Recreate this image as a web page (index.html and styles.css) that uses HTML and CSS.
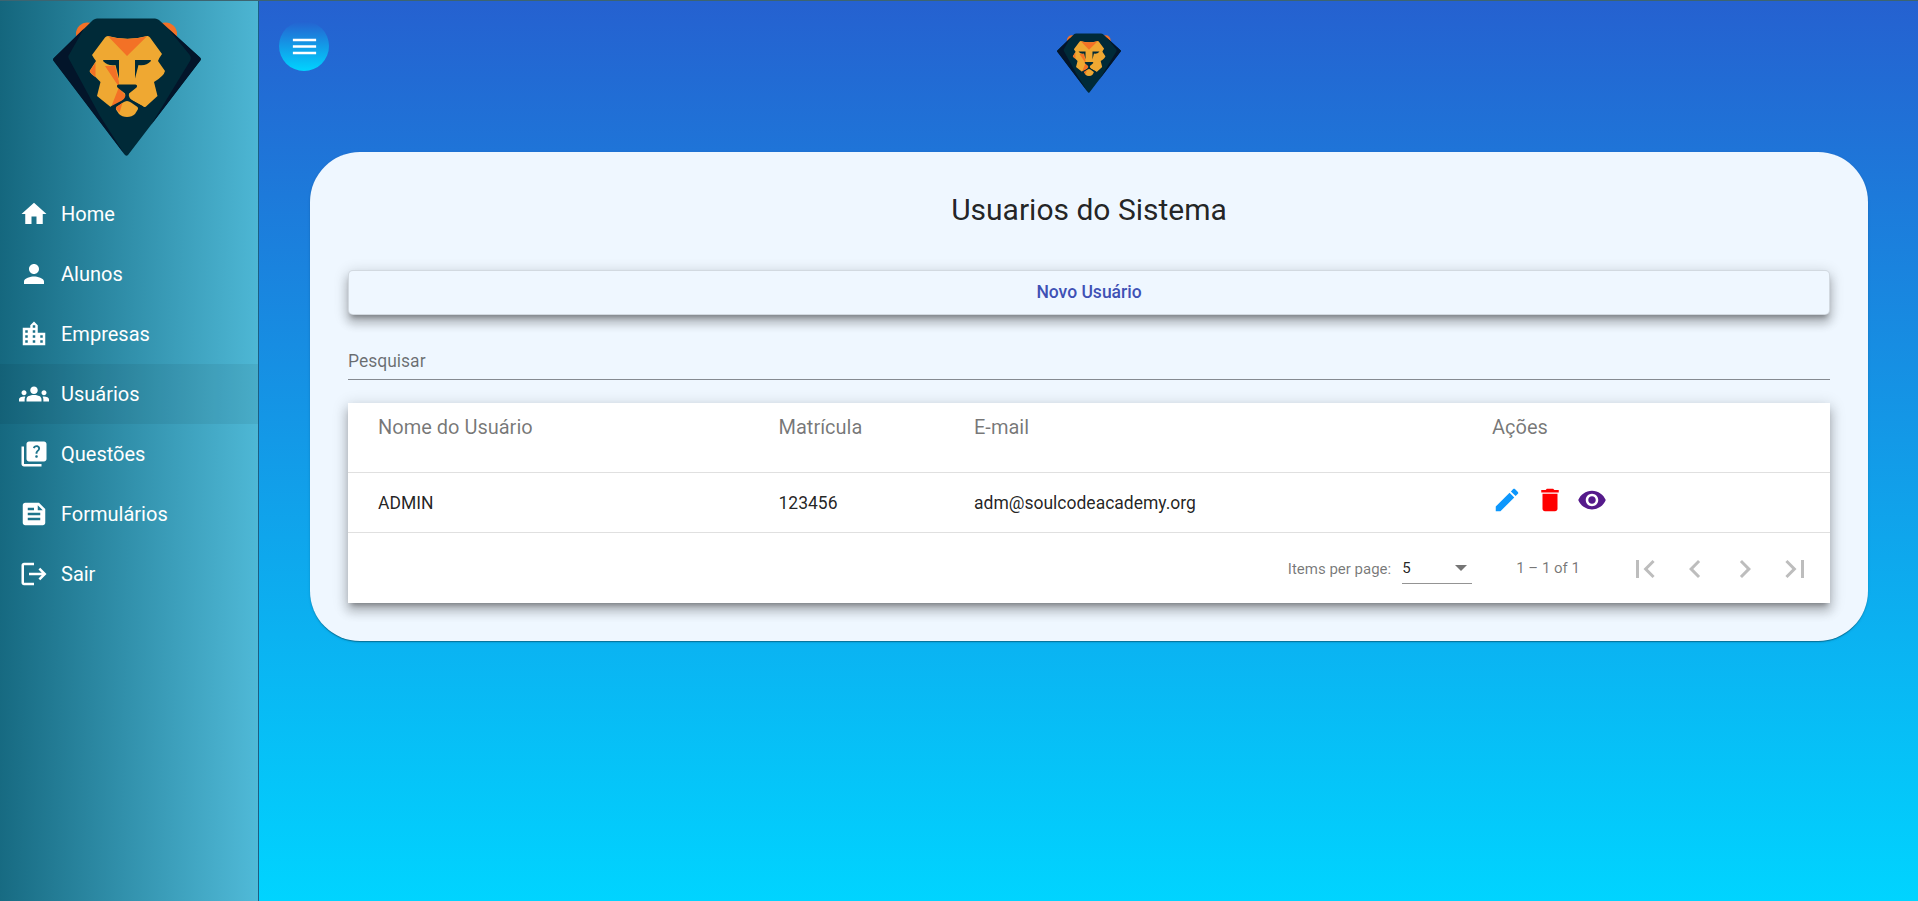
FILE: index.html
```html
<!DOCTYPE html>
<html lang="pt-BR">
<head>
<meta charset="utf-8">
<title>Usuarios do Sistema</title>
<link rel="stylesheet" href="styles.css">
</head>
<body>
<svg class="defs" width="0" height="0" aria-hidden="true">
  <symbol id="lion" viewBox="0 0 148 140">
    <circle cx="34.500" cy="16" r="11.500" fill="#f37126"/>
    <circle cx="112.500" cy="16" r="11.500" fill="#f37126"/>
    <path d="M44 .5h58q2 0 4 1.500L147 39.500q1.500 1.500.3 3L75 137q-1.500 1.600-3 0L.7 43q-1.300-1.500.2-3L40 2Q42 .5 44 .5z" fill="#002a38"/>
    <path d="M31 10.500L.9 40q-1.500 1.500-.2 3L72 137 47 98 16 41q-1.500-3 .5-5zM115 10.500L147 39.500q1.500 1.500.3 3L98 107l39-64q2-4-1-7z" fill="#03152a"/>
    <path d="M55 18q19.500 5.500 39 0 2-.3 3 1.500L109 36q-3 4-4 7l7 10q-1 5-11 11l3.500 14L93 88.500q-1.500 1-3 0L76 80.500q-2-1-4 0L60 88.500q-1.500 1-3 0L44 78l3.500-14-5-5q-5-3-6-6l6.500-10q-3-4-4-6L52 19.500Q53 18 55 18z" fill="#efa832"/>
    <path d="M55 18.300q19.500 5.500 39 0L74 38zM42.500 44.500v14.800l-5-4.800q-1-1 0-2.500zM52 48h10l4 16v6l7 8-1 3-12.500 7.500-1-.5L66 69z" fill="#f37126"/>
    <path d="M50.500 42H66v18.500L62.500 47q-8 1-12-3.500-1-1 0-1.500zM97.500 42H82v18.500L85.500 47q8 1 12-3.500 1-1 0-1.500zM65.500 66.500h17q2.500.5 1 3L76 75.500q-1 4 3.500 7l11 6-1.500 2-15-8-15 8-1.500-2 11.500-6q4.500-3 3-7l-7.500-6q-1.500-2.500 1-3z" fill="#002a38"/>
    <path d="M74 83q2 0 4 1.500l6.500 4.500q1 1 .3 2.500L82 96q-3 3-8 3t-8-3l-3-4.500q-.5-1.500.5-2.500l6.500-4.500q2-1.500 4-1.500z" fill="#efa832"/>
    <path d="M69.500 85l-3 9.500-3.300-3.500q-.5-1.500.5-2.500z" fill="#f37126"/>
  </symbol>
</svg>
<div class="app">
  <aside class="sidebar">
    <svg class="sidebar-logo"><use href="#lion"/></svg>
    <nav class="nav">
      <a class="nav-item"><svg class="icon" viewBox="0 0 24 24"><path d="M10 20v-6h4v6h5v-8h3L12 3 2 12h3v8z"/></svg>Home</a>
      <a class="nav-item"><svg class="icon" viewBox="0 0 24 24"><path d="M12 12c2.210 0 4-1.790 4-4s-1.790-4-4-4-4 1.790-4 4 1.790 4 4 4zm0 2c-2.670 0-8 1.340-8 4v2h16v-2c0-2.660-5.330-4-8-4z"/></svg>Alunos</a>
      <a class="nav-item"><svg class="icon" viewBox="0 0 24 24"><path d="M15 11V5l-3-3-3 3v2H3v14h18V11h-6zm-8 8H5v-2h2v2zm0-4H5v-2h2v2zm0-4H5V9h2v2zm6 8h-2v-2h2v2zm0-4h-2v-2h2v2zm0-4h-2V9h2v2zm0-4h-2V5h2v2zm6 12h-2v-2h2v2zm0-4h-2v-2h2v2z"/></svg>Empresas</a>
      <a class="nav-item active"><svg class="icon" viewBox="0 0 24 24"><path d="M12 12.750c1.630 0 3.070.39 4.240.9 1.080.48 1.760 1.560 1.760 2.730V18H6v-1.610c0-1.180.68-2.260 1.760-2.730 1.170-.52 2.610-.91 4.240-.91zM4 13c1.100 0 2-.9 2-2s-.9-2-2-2-2 .9-2 2 .9 2 2 2zm1.130 1.100C4.760 14.040 4.390 14 4 14c-.99 0-1.930.21-2.780.58C.48 14.900 0 15.620 0 16.430V18h4.500v-1.610c0-.83.23-1.610.63-2.290zM20 13c1.100 0 2-.9 2-2s-.9-2-2-2-2 .9-2 2 .9 2 2 2zm4 3.430c0-.81-.48-1.530-1.220-1.850-.85-.37-1.790-.58-2.780-.58-.39 0-.76.04-1.130.1.400.68.630 1.460.630 2.290V18H24v-1.570zM12 6c1.660 0 3 1.340 3 3s-1.340 3-3 3-3-1.340-3-3 1.340-3 3-3z"/></svg>Usuários</a>
      <a class="nav-item"><svg class="icon" viewBox="0 0 24 24"><path d="M4 6H2v14c0 1.100.9 2 2 2h14v-2H4V6zm16-4H8c-1.100 0-2 .9-2 2v12c0 1.100.9 2 2 2h12c1.100 0 2-.9 2-2V4c0-1.100-.9-2-2-2zm-5.990 13c-.59 0-1.050-.47-1.050-1.050 0-.59.47-1.040 1.050-1.040.59 0 1.040.45 1.040 1.040-.01.580-.45 1.050-1.040 1.050zm2.500-6.170c-.63.93-1.230 1.210-1.560 1.810-.13.24-.18.4-.18 1.180h-1.520c0-.41-.06-1.080.26-1.650.41-.73 1.180-1.160 1.630-1.800.48-.68.21-1.940-1.140-1.940-.88 0-1.320.67-1.500 1.230l-1.370-.57C11.510 5.960 12.520 5 13.990 5c1.230 0 2.080.56 2.510 1.260.37.6.58 1.730.01 2.570z"/></svg>Questões</a>
      <a class="nav-item"><svg class="icon" viewBox="0 0 24 24"><path d="M16 3H5c-1.100 0-1.990.9-1.990 2L3 19c0 1.100.89 2 1.990 2H19c1.100 0 2-.9 2-2V8l-5-5zM7 7h5v2H7V7zm10 10H7v-2h10v2zm0-4H7v-2h10v2zm-2-4V5l4 4h-4z"/></svg>Formulários</a>
      <a class="nav-item"><svg class="icon" viewBox="0 0 24 24"><path d="M17 7l-1.410 1.410L18.170 11H8v2h10.170l-2.580 2.580L17 17l5-5zM4 5h8V3H4c-1.100 0-2 .9-2 2v14c0 1.100.9 2 2 2h8v-2H4V5z" /></svg>Sair</a>
    </nav>
  </aside>
  <main class="content">
    <header class="topbar">
      <button class="menu-button" aria-label="Menu"><svg class="icon" viewBox="0 0 24 24"><path d="M3 18h18v-2H3v2zm0-5h18v-2H3v2zm0-7v2h18V6H3z"/></svg></button>
      <svg class="topbar-logo"><use href="#lion"/></svg>
    </header>
    <section class="card">
      <h1 class="title">Usuarios do Sistema</h1>
      <button class="new-button">Novo Usuário</button>
      <div class="search">Pesquisar</div>
      <div class="table">
        <div class="row head"><span>Nome do Usuário</span><span>Matrícula</span><span>E-mail</span><span>Ações</span></div>
        <div class="row body"><span>ADMIN</span><span>123456</span><span>adm@soulcodeacademy.org</span>
          <span class="actions">
            <svg class="icon edit" viewBox="0 0 24 24"><path d="M3 17.250V21h3.750L17.810 9.940l-3.750-3.750L3 17.250zM20.710 7.040c.39-.39.39-1.020 0-1.410l-2.340-2.340c-.39-.39-1.020-.39-1.410 0l-1.830 1.830 3.750 3.750 1.830-1.830z"/></svg>
            <svg class="icon delete" viewBox="0 0 24 24"><path d="M6 19c0 1.100.9 2 2 2h8c1.100 0 2-.9 2-2V7H6v12zM19 4h-3.500l-1-1h-5l-1 1H5v2h14V4z"/></svg>
            <svg class="icon view" viewBox="0 0 24 24"><path d="M12 4.500C7 4.500 2.730 7.610 1 12c1.730 4.390 6 7.500 11 7.500s9.270-3.110 11-7.500c-1.730-4.390-6-7.500-11-7.500zM12 17c-2.760 0-5-2.240-5-5s2.240-5 5-5 5 2.240 5 5-2.240 5-5 5zm0-8c-1.660 0-3 1.340-3 3s1.340 3 3 3 3-1.340 3-3-1.340-3-3-3z"/></svg>
          </span>
        </div>
        <div class="paginator">
          <span class="page-label">Items per page:</span>
          <span class="page-select">5<i class="caret"></i></span>
          <span class="range">1 – 1 of 1</span>
          <span class="pages">
            <svg viewBox="0 0 24 24"><path d="M18.410 16.590L13.820 12l4.590-4.590L17 6l-6 6 6 6zM6 6h2v12H6z"/></svg>
            <svg viewBox="0 0 24 24"><path d="M15.410 7.410L14 6l-6 6 6 6 1.410-1.410L10.830 12z"/></svg>
            <svg viewBox="0 0 24 24"><path d="M10 6L8.590 7.410 13.170 12l-4.580 4.590L10 18l6-6z"/></svg>
            <svg viewBox="0 0 24 24"><path d="M5.590 7.410L10.180 12l-4.590 4.590L7 18l6-6-6-6zM16 6h2v12h-2z"/></svg>
          </span>
        </div>
      </div>
    </section>
  </main>
</div>
</body>
</html>
```
FILE: styles.css
```css
* { box-sizing: border-box; }
body {
  margin: 0;
  font-family: Roboto, "Liberation Sans", sans-serif;
  color: rgba(0, 0, 0, 0.87);
}
.defs { display: none; }
.app {
  display: flex;
  height: 901px;
  border-top: 1px solid #3d6470;
  overflow: hidden;
}
.sidebar {
  width: 259px;
  flex: none;
  border-right: 1px solid #1b5f86;
  background: linear-gradient(91deg, #14667d 0%, #3190ab 50%, #50bad8 100%);
}
.sidebar-logo {
  display: block;
  width: 148px;
  height: 140px;
  margin: 17px 0 0 53px;
}
.nav { margin-top: 26px; }
.nav-item {
  display: flex;
  align-items: center;
  gap: 12px;
  height: 60px;
  padding-left: 19px;
  color: #fff;
  font-size: 20px;
}
.nav-item.active { background: rgba(0, 0, 0, 0.06); }
.icon {
  width: 30px;
  height: 30px;
  flex: none;
  fill: currentColor;
}
.content {
  flex: 1;
  padding: 0 50px 0 51px;
  background: linear-gradient(180deg, #2561d0 0%, #00d4ff 100%);
}
.topbar {
  display: grid;
  grid-template-columns: 1fr 64px 1fr;
  height: 151px;
}
.menu-button {
  display: grid;
  place-items: center;
  width: 50px;
  height: 50px;
  margin: 20px 0 0 -31px;
  padding: 0;
  border: 0;
  border-radius: 50%;
  color: #fff;
  background: linear-gradient(180deg, #2561d0 0%, #00d4ff 100%);
}
.menu-button .icon { width: 31px; height: 31px; }
.topbar-logo {
  width: 64px;
  height: 61px;
  margin-top: 32px;
}
.card {
  height: 489px;
  padding: 39px 38px 38px;
  border-radius: 50px;
  background: #eff7ff;
  box-shadow: 0 2px 1px -1px rgba(0, 0, 0, 0.2), 0 1px 1px rgba(0, 0, 0, 0.14), 0 1px 3px rgba(0, 0, 0, 0.12);
}
.title {
  margin: 0;
  font-size: 30px;
  font-weight: 400;
  line-height: 38px;
  text-align: center;
}
.new-button {
  display: block;
  width: 100%;
  height: 45px;
  margin-top: 41px;
  padding: 0 0 2px;
  border: 1px solid rgba(0, 0, 0, 0.12);
  border-radius: 5px;
  background: #eff7ff;
  color: #3f51b5;
  font: 500 17.500px Roboto, sans-serif;
  box-shadow: 0 5px 5px -3px rgba(0, 0, 0, 0.3), 0 8px 10px 1px rgba(0, 0, 0, 0.18), 0 3px 14px 2px rgba(0, 0, 0, 0.14);
}
.search {
  height: 43px;
  margin-top: 22px;
  padding-top: 13px;
  border-bottom: 1px solid #858a91;
  color: rgba(0, 0, 0, 0.56);
  font-size: 17.500px;
  line-height: 22px;
}
.table {
  height: 200px;
  margin-top: 23px;
  background: #fff;
  box-shadow: 0 5px 5px -3px rgba(0, 0, 0, 0.3), 0 8px 10px 1px rgba(0, 0, 0, 0.18), 0 3px 14px 2px rgba(0, 0, 0, 0.14);
}
.row {
  display: grid;
  grid-template-columns: 400.500px 195.500px 518px 1fr;
  padding-left: 30px;
  border-bottom: 1px solid #e0e0e0;
}
.head {
  height: 70px;
  padding-top: 11px;
  color: rgba(0, 0, 0, 0.54);
  font-size: 20px;
  line-height: 26px;
}
.body {
  height: 60px;
  align-items: center;
  font-size: 17.500px;
}
.actions {
  display: flex;
  gap: 12.500px;
  margin-top: -5px;
}
.edit { color: #0d97fc; }
.delete { color: #f00; }
.view { color: #551a8b; }
.paginator {
  display: flex;
  align-items: center;
  justify-content: flex-end;
  height: 71px;
  padding-right: 10px;
  color: rgba(0, 0, 0, 0.54);
  font-size: 15px;
}
.page-label { padding-top: 1px; }
.page-select {
  display: flex;
  align-items: center;
  justify-content: space-between;
  width: 70px;
  height: 30px;
  margin-left: 11px;
  padding-right: 5px;
  border-bottom: 1px solid #949494;
  color: rgba(0, 0, 0, 0.87);
}
.caret {
  border: 6.500px solid transparent;
  border-top-color: #757575;
  border-bottom: 0;
}
.range { margin: 0 40px 2px 44px; }
.pages { display: flex; }
.pages svg {
  width: 50px;
  height: 36px;
  fill: #bdbdbd;
}
```
